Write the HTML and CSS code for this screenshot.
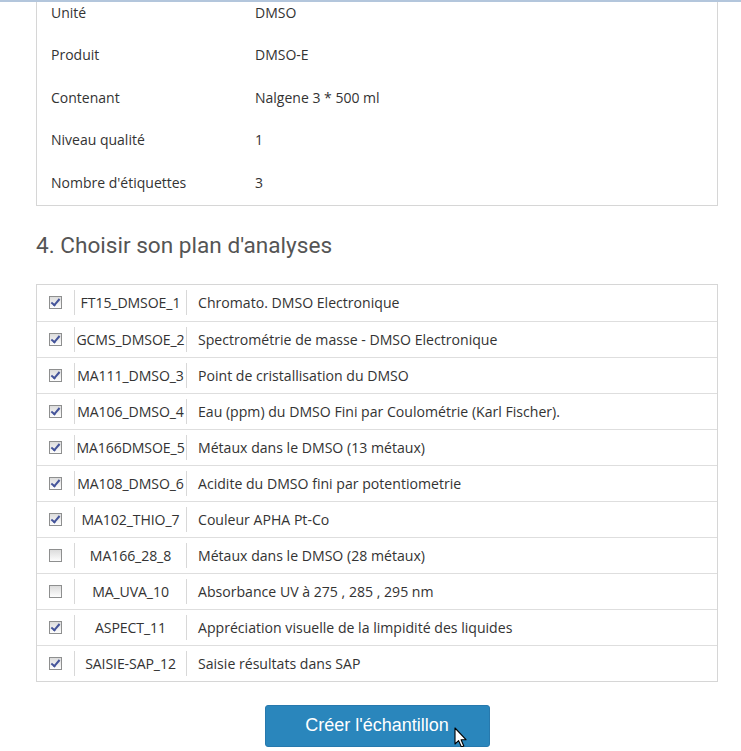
FILE: index.html
```html
<!DOCTYPE html>
<html lang="fr">
<head>
<meta charset="utf-8">
<link rel="stylesheet" href="styles.css">
</head>
<body>
<div class="topline"></div>
<main class="page">
  <section class="details">
    <div class="drow"><span class="dlabel">Unité</span><span class="dvalue">DMSO</span></div>
    <div class="drow"><span class="dlabel">Produit</span><span class="dvalue">DMSO-E</span></div>
    <div class="drow"><span class="dlabel">Contenant</span><span class="dvalue">Nalgene 3 * 500 ml</span></div>
    <div class="drow"><span class="dlabel">Niveau qualité</span><span class="dvalue">1</span></div>
    <div class="drow"><span class="dlabel">Nombre d'étiquettes</span><span class="dvalue">3</span></div>
  </section>

  <h2 class="title">4. Choisir son plan d'analyses</h2>

  <div class="plan">
    <div class="prow"><span class="cb on"></span><span class="code">FT15_DMSOE_1</span><span class="desc">Chromato. DMSO Electronique</span></div>
    <div class="prow"><span class="cb on"></span><span class="code">GCMS_DMSOE_2</span><span class="desc">Spectrométrie de masse - DMSO Electronique</span></div>
    <div class="prow"><span class="cb on"></span><span class="code">MA111_DMSO_3</span><span class="desc">Point de cristallisation du DMSO</span></div>
    <div class="prow"><span class="cb on"></span><span class="code">MA106_DMSO_4</span><span class="desc">Eau (ppm) du DMSO Fini par Coulométrie (Karl Fischer).</span></div>
    <div class="prow"><span class="cb on"></span><span class="code">MA166DMSOE_5</span><span class="desc">Métaux dans le DMSO (13 métaux)</span></div>
    <div class="prow"><span class="cb on"></span><span class="code">MA108_DMSO_6</span><span class="desc">Acidite du DMSO fini par potentiometrie</span></div>
    <div class="prow"><span class="cb on"></span><span class="code">MA102_THIO_7</span><span class="desc">Couleur APHA Pt-Co</span></div>
    <div class="prow"><span class="cb"></span><span class="code">MA166_28_8</span><span class="desc">Métaux dans le DMSO (28 métaux)</span></div>
    <div class="prow"><span class="cb"></span><span class="code">MA_UVA_10</span><span class="desc">Absorbance UV à 275 , 285 , 295 nm</span></div>
    <div class="prow"><span class="cb on"></span><span class="code">ASPECT_11</span><span class="desc">Appréciation visuelle de la limpidité des liquides</span></div>
    <div class="prow"><span class="cb on"></span><span class="code">SAISIE-SAP_12</span><span class="desc">Saisie résultats dans SAP</span></div>
  </div>

  <div class="actions">
    <button class="btn" type="button">Créer l'échantillon
      <svg class="cursor" width="14" height="22" viewBox="0 0 14 22"><path d="M1 1 L1 17 L4.6 13.6 L7.4 20 L9.8 19 L7.1 12.7 L12 12.7 Z" fill="#fff" stroke="#000" stroke-width="1.1" stroke-linejoin="round"/></svg>
    </button>
  </div>
</main>
</body>
</html>
```
FILE: styles.css
```css
* { box-sizing: border-box; }
html, body { margin: 0; padding: 0; background: #fff; }
body { font-family: "Open Sans", "Liberation Sans", sans-serif; color: #333; overflow: hidden; }

.topline {
  position: fixed; top: 0; left: 0; right: 0;
  height: 2px; background: #b3c6dc; z-index: 5;
}

.page { width: 682px; margin-left: 36px; }

.details {
  margin-top: -9px;
  border: 1px solid #d6d6d6;
  border-top: none;
  padding: 0 14px 1px;
}
.drow { display: flex; align-items: center; height: 42.5px; font-size: 14px; color: #333; }
.dlabel { width: 204px; }

.title {
  font-family: Roboto, "Liberation Sans", sans-serif;
  font-weight: 400; font-size: 22.6px; color: #555;
  margin: 27px 0 0; line-height: 26px;
}

.plan { margin-top: 25px; border: 1px solid #d6d6d6; }
.prow {
  display: flex; align-items: center; height: 36px;
  border-top: 1px solid #dedede; font-size: 14.1px; color: #333;
}
.prow:first-child { border-top: none; height: 36px; }

.cb {
  width: 13px; height: 13px; margin: 0 12px 0 12px;
  border: 1px solid #8e8f8f;
  background: linear-gradient(#dcdcdc, #fdfdfd);
  position: relative; flex: none;
}
.cb.on::after {
  content: ""; position: absolute; left: 3px; top: 0px;
  width: 3px; height: 7px;
  border: solid #44549a; border-width: 0 2px 2px 0;
  transform: rotate(40deg);
}

.code {
  width: 113px; height: 25px; line-height: 25px; text-align: center;
  border-left: 1px solid #d8d8d8; border-right: 1px solid #d8d8d8;
  flex: none; white-space: nowrap; letter-spacing: -0.1px;
}
.desc { padding-left: 11px; white-space: nowrap; }

.actions { display: flex; justify-content: center; margin-top: 23px; }
.btn {
  position: relative;
  width: 225px; height: 42px;
  background: #2a86bc; color: #fff; border: 1px solid #2779ad; border-radius: 3px;
  font-family: "Liberation Sans", Arial, sans-serif; font-size: 18px;
  padding: 0;
}
.cursor { position: absolute; left: 188px; top: 21px; }
```
